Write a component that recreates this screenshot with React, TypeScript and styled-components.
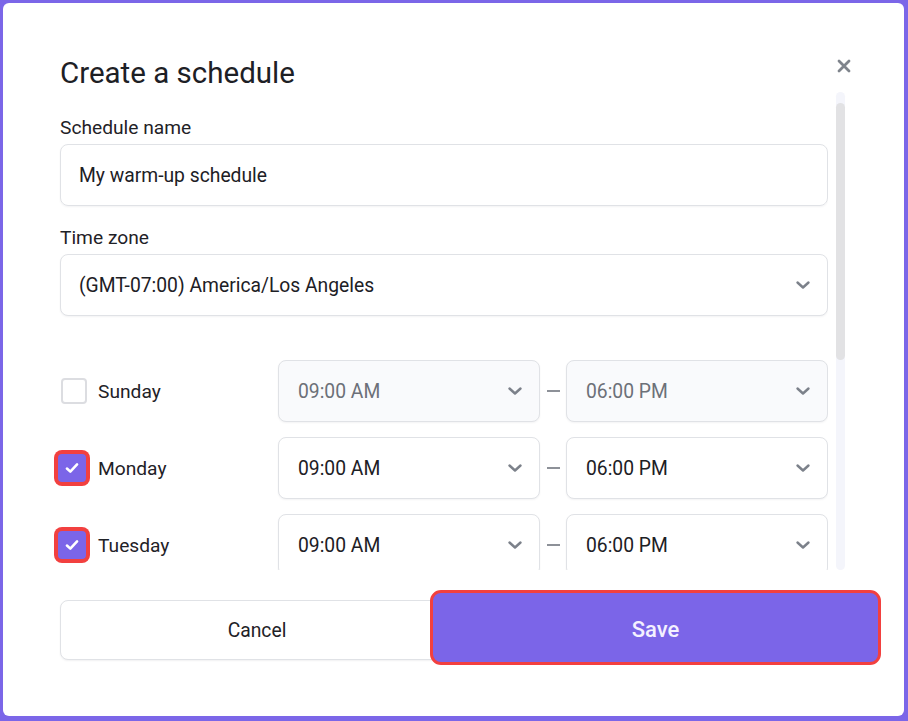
import React from "react";
import styled, { createGlobalStyle } from "styled-components";

const GlobalStyle = createGlobalStyle`
  html, body {
    margin: 0;
    padding: 0;
    background: #7b66e8;
  }
  * {
    box-sizing: border-box;
  }
  #root {
    padding: 3px 4px 5px 3px;
    font-family: "Roboto", "Liberation Sans", sans-serif;
    color: #1d2025;
  }
`;

type Day = {
  name: string;
  checked: boolean;
};

const days: Day[] = [
  { name: "Sunday", checked: false },
  { name: "Monday", checked: true },
  { name: "Tuesday", checked: true },
  { name: "Wednesday", checked: true },
  { name: "Thursday", checked: true },
  { name: "Friday", checked: true },
  { name: "Saturday", checked: false },
];

const Chevron = () => (
  <svg width="24" height="24" viewBox="0 0 24 24" fill="none">
    <polyline
      points="6.5 9.5 12 14.5 17.5 9.5"
      stroke="#7c818a"
      strokeWidth="2.4"
      strokeLinecap="round"
      strokeLinejoin="round"
    />
  </svg>
);

const Check = () => (
  <svg width="18" height="18" viewBox="0 0 16 16" fill="none">
    <polyline
      points="3.5 8.5 6.5 11.2 12.5 4.8"
      stroke="#ffffff"
      strokeWidth="2.3"
      strokeLinecap="round"
      strokeLinejoin="round"
    />
  </svg>
);

const CloseIcon = () => (
  <svg width="14" height="14" viewBox="0 0 14 14" fill="none">
    <path
      d="M2 2 L12 12 M12 2 L2 12"
      stroke="#7f848c"
      strokeWidth="2.8"
      strokeLinecap="round"
    />
  </svg>
);

const TimeSelect = (props: { value: string; disabled?: boolean }) => (
  <SelectBox disabled={props.disabled}>
    <span>{props.value}</span>
    <Chevron />
  </SelectBox>
);

export default function App() {
  return (
    <>
      <GlobalStyle />
      <Card>
        <Header>
          <Title>Create a schedule</Title>
          <CloseButton>
            <CloseIcon />
          </CloseButton>
        </Header>

        <ScrollArea>
          <Content>
            <Field>
              <Label>Schedule name</Label>
              <TextInput>My warm-up schedule</TextInput>
            </Field>
            <Field>
              <Label>Time zone</Label>
              <SelectBox wide>
                <span>(GMT-07:00) America/Los Angeles</span>
                <Chevron />
              </SelectBox>
            </Field>

            <Days>
              {days.map((day) => (
                <DayRow key={day.name}>
                  <DayLabel>
                    <Checkbox checked={day.checked}>
                      {day.checked ? <Check /> : null}
                    </Checkbox>
                    <span>{day.name}</span>
                  </DayLabel>
                  <TimeSelect value="09:00 AM" disabled={!day.checked} />
                  <Dash />
                  <TimeSelect value="06:00 PM" disabled={!day.checked} />
                </DayRow>
              ))}
            </Days>
          </Content>
          <Track>
            <Thumb />
          </Track>
        </ScrollArea>

        <Footer>
          <CancelButton>Cancel</CancelButton>
          <SaveButton>Save</SaveButton>
        </Footer>
      </Card>
    </>
  );
}

const Card = styled.div`
  background: #ffffff;
  border-radius: 6px;
  height: 713px;
  padding: 53px 59px 0 57px;
  display: flex;
  flex-direction: column;
`;

const Header = styled.div`
  display: flex;
  justify-content: space-between;
  align-items: flex-start;
  margin-right: -6px;
  height: 34px;
`;

const Title = styled.h2`
  margin: 0;
  font-size: 29.5px;
  font-weight: 400;
  line-height: 34px;
  color: #1d2025;
`;

const CloseButton = styled.div`
  width: 14px;
  height: 14px;
  margin-top: 3px;
  display: flex;
  cursor: pointer;
`;

const ScrollArea = styled.div`
  margin-top: 2px;
  margin-left: -10px;
  height: 478px;
  display: flex;
  gap: 8px;
`;

const Content = styled.div`
  width: 778px;
  height: 100%;
  overflow: hidden;
  padding: 24px 0 0 10px;
  display: flex;
  flex-direction: column;
`;

const Track = styled.div`
  position: relative;
  width: 9px;
  height: 100%;
  background: #f4f5fb;
  border-radius: 5px;
`;

const Thumb = styled.div`
  position: absolute;
  left: 0;
  top: 11px;
  width: 9px;
  height: 257px;
  background: #e2e2e4;
  border-radius: 5px;
`;

const Field = styled.div`
  display: flex;
  flex-direction: column;
  margin-bottom: 20px;
  flex-shrink: 0;
`;

const Label = styled.label`
  font-size: 19.2px;
  line-height: 24px;
  margin-bottom: 4px;
  color: #1f2227;
`;

const TextInput = styled.div`
  height: 62px;
  border: 1px solid #e0e2e6;
  border-radius: 8px;
  padding: 0 18px;
  display: flex;
  align-items: center;
  font-size: 19.3px;
  color: #1d2025;
  box-shadow: 0 1px 2px rgba(20, 24, 40, 0.05);
`;

const SelectBox = styled.div<{ disabled?: boolean; wide?: boolean }>`
  height: 62px;
  border: 1px solid #e0e2e6;
  border-radius: 8px;
  padding: 0 12px 0 ${(p) => (p.wide ? "18px" : "19px")};
  display: flex;
  align-items: center;
  justify-content: space-between;
  font-size: 19.3px;
  background: ${(p) => (p.disabled ? "#f9fafc" : "#ffffff")};
  color: ${(p) => (p.disabled ? "#6c7078" : "#1d2025")};
  box-shadow: 0 1px 2px rgba(20, 24, 40, 0.05);
`;

const Days = styled.div`
  margin-top: 24px;
  display: flex;
  flex-direction: column;
  gap: 15px;
  flex-shrink: 0;
`;

const DayRow = styled.div`
  display: grid;
  grid-template-columns: 218px 262px 26px 262px;
  align-items: center;
`;

const DayLabel = styled.div`
  display: flex;
  align-items: center;
  gap: 11px;
  font-size: 19.2px;
  color: #1f2227;
`;

const Checkbox = styled.div<{ checked: boolean }>`
  width: ${(p) => (p.checked ? "28px" : "26px")};
  height: ${(p) => (p.checked ? "28px" : "26px")};
  margin: ${(p) => (p.checked ? "0 1px 0 -2px" : "0 0 0 1px")};
  border-radius: 4px;
  display: flex;
  align-items: center;
  justify-content: center;
  background: ${(p) => (p.checked ? "#7b65e8" : "#ffffff")};
  border: ${(p) => (p.checked ? "none" : "2px solid #dcdde1")};
  box-shadow: ${(p) => (p.checked ? "0 0 0 4px #f2403f" : "none")};
`;

const Dash = styled.div`
  justify-self: center;
  width: 13px;
  height: 2px;
  background: #8d9198;
`;

const Footer = styled.div`
  margin-top: 30px;
  display: flex;
  align-items: flex-start;
  margin-right: -36px;
`;

const CancelButton = styled.button`
  width: 394px;
  height: 60px;
  border: 1px solid #e0e2e6;
  border-radius: 8px;
  background: #ffffff;
  font-family: "Roboto", "Liberation Sans", sans-serif;
  font-size: 19.3px;
  color: #1f2227;
  box-shadow: 0 1px 2px rgba(20, 24, 40, 0.06);
`;

const SaveButton = styled.button`
  position: relative;
  z-index: 1;
  width: 451px;
  height: 75px;
  margin-left: -24px;
  margin-top: -10px;
  padding-top: 4px;
  border: 3px solid #f2403f;
  border-radius: 11px;
  background: #7b65e8;
  font-family: "Roboto", "Liberation Sans", sans-serif;
  font-size: 22px;
  font-weight: 500;
  color: #f4f1ff;
`;
